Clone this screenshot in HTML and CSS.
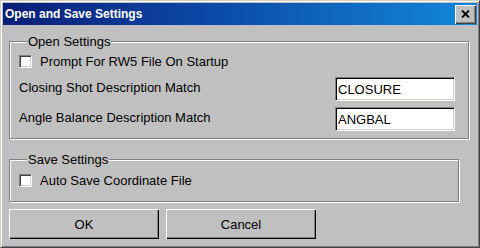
FILE: index.html
```html
<!DOCTYPE html>
<html>
<head>
<meta charset="utf-8">
<link rel="stylesheet" href="styles.css">
</head>
<body>
<div class="window">
  <div class="titlebar">
    <span class="title">Open and Save Settings</span>
    <button class="close" aria-label="Close">
      <svg width="9" height="8" viewBox="0 0 9 8"><path d="M1 0.5 L8 7.5 M8 0.5 L1 7.5" stroke="#000" stroke-width="1.8" fill="none"/></svg>
    </button>
  </div>
  <div class="content">
    <fieldset class="group group-open">
      <legend>Open Settings</legend>
      <label class="check-row"><span class="checkbox"></span>Prompt For RW5 File On Startup</label>
      <div class="field-row">
        <span class="label">Closing Shot Description Match</span>
        <span class="textbox">CLOSURE</span>
      </div>
      <div class="field-row">
        <span class="label">Angle Balance Description Match</span>
        <span class="textbox">ANGBAL</span>
      </div>
    </fieldset>
    <fieldset class="group group-save">
      <legend>Save Settings</legend>
      <label class="check-row"><span class="checkbox"></span>Auto Save Coordinate File</label>
    </fieldset>
    <div class="buttons">
      <button class="btn">OK</button>
      <button class="btn">Cancel</button>
    </div>
  </div>
</div>
</body>
</html>
```
FILE: styles.css
```css
* { box-sizing: border-box; }
html, body { margin: 0; padding: 0; background: #c0c0c0; }
body { font-family: "Liberation Sans", Arial, sans-serif; font-size: 13px; color: #000; }

.window {
  width: 480px;
  height: 248px;
  background: #c0c0c0;
  border-top: 1px solid #d4d0c8;
  border-left: 1px solid #d4d0c8;
  border-right: 1px solid #404040;
  border-bottom: 1px solid #404040;
  box-shadow: inset 1px 1px 0 #fff, inset -1px -1px 0 #808080;
  padding: 2px;
}

.titlebar {
  height: 22px;
  background: linear-gradient(to right, #0a1e78 0%, #0c4aa8 45%, #1288d8 100%);
  display: flex;
  align-items: center;
  justify-content: space-between;
  padding: 0 1px 0 2px;
}
.title {
  color: #fff;
  font-weight: bold;
  font-size: 12px;
}
.close {
  width: 21px;
  height: 19px;
  padding: 0;
  margin: 0;
  background: #c0c0c0;
  border: none;
  box-shadow: inset 1px 1px 0 #fff, inset -1px -1px 0 #404040, inset -2px -2px 0 #808080;
  display: flex;
  align-items: center;
  justify-content: center;
}
.close svg { display: block; margin-top: -1px; }

.content {
  padding: 9px 0 0 6px;
}

.group {
  margin: 0;
  padding: 0 0 0 9px;
  border: 1px solid #808080;
  box-shadow: inset 1px 1px 0 #fff, 1px 1px 0 #fff;
}
.group legend {
  padding: 0 1px;
  margin-left: 8px;
  background: #c0c0c0;
  font-size: 13px;
  line-height: 15px;
}
.group-open { width: 460px; padding-bottom: 7px; }
.group-save { width: 450px; margin-top: 13px; padding-bottom: 13px; }

.check-row {
  display: flex;
  align-items: center;
  height: 15px;
  margin-top: 5px;
}
.group-save .check-row { margin-top: 6px; }
.checkbox {
  width: 13px;
  height: 13px;
  background: #fff;
  border-top: 1px solid #808080;
  border-left: 1px solid #808080;
  border-right: 1px solid #fff;
  border-bottom: 1px solid #fff;
  box-shadow: inset 1px 1px 0 #404040, inset -1px -1px 0 #d4d0c8;
  margin-right: 8px;
}

.field-row {
  display: flex;
  align-items: flex-start;
  justify-content: space-between;
  height: 24px;
  margin-right: 13px;
  margin-top: 6px;
}
.field-row:first-of-type { margin-top: 8px; }
.label {
  line-height: 15px;
  padding-top: 3px;
}
.textbox {
  width: 120px;
  height: 24px;
  background: #fff;
  border-top: 1px solid #808080;
  border-left: 1px solid #808080;
  border-right: 1px solid #fff;
  border-bottom: 1px solid #fff;
  box-shadow: inset 1px 1px 0 #000, inset -1px -1px 0 #d4d0c8;
  padding: 0 0 0 2px;
  display: flex;
  align-items: center;
  font-size: 13px;
}

.buttons {
  display: flex;
  gap: 7px;
  margin-top: 7px;
}
.btn {
  width: 150px;
  height: 30px;
  margin: 0;
  padding: 0;
  background: #c0c0c0;
  border: none;
  font-family: "Liberation Sans", Arial, sans-serif;
  font-size: 13px;
  color: #000;
  box-shadow: inset 1px 1px 0 #fff, inset -1px -1px 0 #000, inset -2px -2px 0 #808080;
}
```
